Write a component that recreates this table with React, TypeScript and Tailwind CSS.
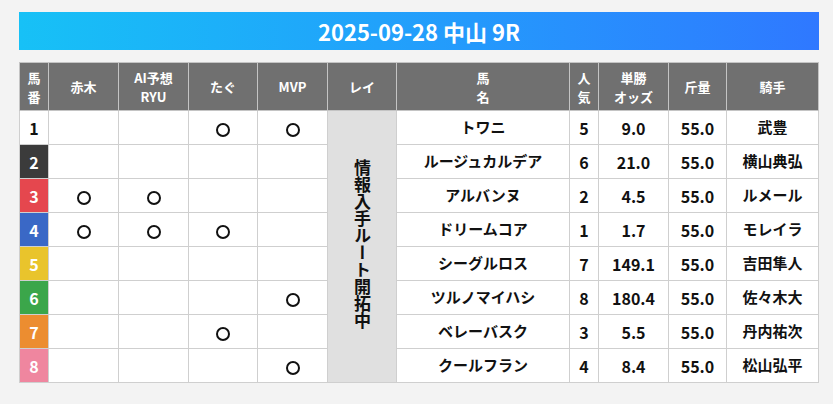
import React from 'react';

type Row = {
  no: number;
  bg: string;
  akagi: boolean;
  ai: boolean;
  tagu: boolean;
  mvp: boolean;
  name: string;
  pop: number;
  odds: string;
  weight: string;
  jockey: string;
};

const rows: Row[] = [
  { no: 1, bg: 'bg-white text-[#111]', akagi: false, ai: false, tagu: true, mvp: true, name: 'トワニ', pop: 5, odds: '9.0', weight: '55.0', jockey: '武豊' },
  { no: 2, bg: 'bg-[#3b3b3b] text-white', akagi: false, ai: false, tagu: false, mvp: false, name: 'ルージュカルデア', pop: 6, odds: '21.0', weight: '55.0', jockey: '横山典弘' },
  { no: 3, bg: 'bg-[#e5474e] text-white', akagi: true, ai: true, tagu: false, mvp: false, name: 'アルバンヌ', pop: 2, odds: '4.5', weight: '55.0', jockey: 'ルメール' },
  { no: 4, bg: 'bg-[#3a68c6] text-white', akagi: true, ai: true, tagu: true, mvp: false, name: 'ドリームコア', pop: 1, odds: '1.7', weight: '55.0', jockey: 'モレイラ' },
  { no: 5, bg: 'bg-[#e9c42c] text-white', akagi: false, ai: false, tagu: false, mvp: false, name: 'シーグルロス', pop: 7, odds: '149.1', weight: '55.0', jockey: '吉田隼人' },
  { no: 6, bg: 'bg-[#3ba64a] text-white', akagi: false, ai: false, tagu: false, mvp: true, name: 'ツルノマイハシ', pop: 8, odds: '180.4', weight: '55.0', jockey: '佐々木大' },
  { no: 7, bg: 'bg-[#ec8d30] text-white', akagi: false, ai: false, tagu: true, mvp: false, name: 'ベレーバスク', pop: 3, odds: '5.5', weight: '55.0', jockey: '丹内祐次' },
  { no: 8, bg: 'bg-[#ef869f] text-white', akagi: false, ai: false, tagu: false, mvp: true, name: 'クールフラン', pop: 4, odds: '8.4', weight: '55.0', jockey: '松山弘平' },
];

const font = { fontFamily: '"Noto Sans CJK JP", "Noto Sans", sans-serif' };

const Mark = ({ on }: { on: boolean }) =>
  on ? <span className="inline-block w-[14px] h-[14px] rounded-full border-2 border-[#111] align-middle" /> : null;

const th = 'border border-[#c4c4c4] bg-[#707070] text-white font-bold text-[13px] leading-[19px] text-center align-middle p-0';
const td = 'border border-[#cfcfcf] text-center align-middle p-0 text-[#111]';

// two-line header label
const Two = ({ a, b }: { a: string; b: string }) => (
  <div className="flex flex-col items-center">
    <span>{a}</span>
    <span>{b}</span>
  </div>
);

export default function App() {
  return (
    <div className="w-[833px] h-[404px] bg-[#f3f3f3] pt-[12px] px-[19px]" style={font}>
      <div className="w-[800px] h-[38px] flex items-center justify-center bg-gradient-to-r from-[#17c1f6] to-[#2f78ff] text-white text-[22px] font-bold">
        2025-09-28 中山 9R
      </div>
      <table className="mt-[12px] w-[799px] table-fixed border-collapse bg-white">
        <colgroup>
          <col className="w-[29px]" />
          <col className="w-[70px]" />
          <col className="w-[70px]" />
          <col className="w-[69px]" />
          <col className="w-[70px]" />
          <col className="w-[69px]" />
          <col className="w-[173px]" />
          <col className="w-[29px]" />
          <col className="w-[70px]" />
          <col className="w-[58px]" />
          <col className="w-[92px]" />
        </colgroup>
        <thead>
          <tr className="h-[48px]">
            <th className={th}><Two a="馬" b="番" /></th>
            <th className={th}>赤木</th>
            <th className={th}><Two a="AI予想" b="RYU" /></th>
            <th className={th}>たぐ</th>
            <th className={th}>MVP</th>
            <th className={th}>レイ</th>
            <th className={th}><Two a="馬" b="名" /></th>
            <th className={th}><Two a="人" b="気" /></th>
            <th className={th}><Two a="単勝" b="オッズ" /></th>
            <th className={th}>斤量</th>
            <th className={th}>騎手</th>
          </tr>
        </thead>
        <tbody>
          {rows.map((r, i) => (
            <tr key={r.no} className="h-[34px]">
              <td className={`border border-[#cfcfcf] text-center align-middle p-0 ${r.bg} text-[16px] font-bold`}>{r.no}</td>
              <td className={td}><Mark on={r.akagi} /></td>
              <td className={td}><Mark on={r.ai} /></td>
              <td className={td}><Mark on={r.tagu} /></td>
              <td className={td}><Mark on={r.mvp} /></td>
              {i === 0 && (
                <td rowSpan={8} className={`${td} bg-[#e0e0e0]`}>
                  <span className="inline-block text-[17px] font-bold leading-[18px] [writing-mode:vertical-rl] [text-orientation:upright]">
                    情報入手ルート開拓中
                  </span>
                </td>
              )}
              <td className={`${td} text-[15px] font-bold`}>{r.name}</td>
              <td className={`${td} text-[16px] font-bold`}>{r.pop}</td>
              <td className={`${td} text-[16px] font-bold`}>{r.odds}</td>
              <td className={`${td} text-[16px] font-bold`}>{r.weight}</td>
              <td className={`${td} text-[15px] font-bold`}>{r.jockey}</td>
            </tr>
          ))}
        </tbody>
      </table>
    </div>
  );
}
